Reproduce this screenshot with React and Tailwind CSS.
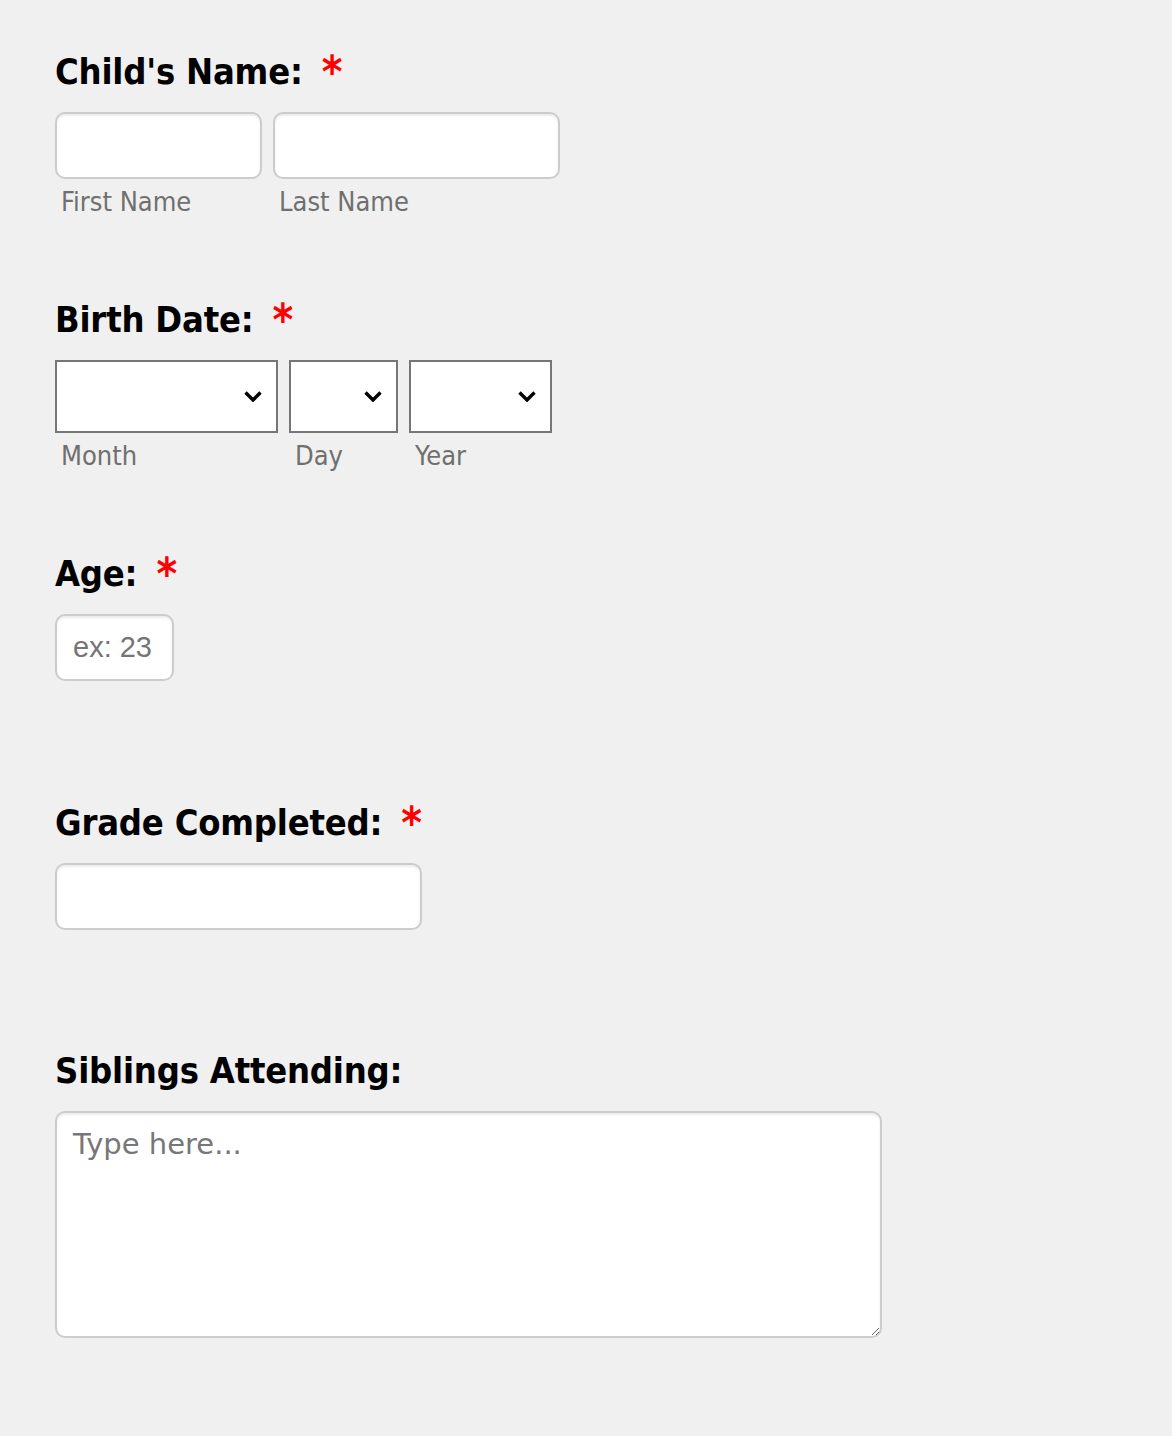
function Req() {
  return (
    <span className="ml-[19px] inline-block align-top text-[44px] leading-[40px] text-[#ff0000]">*</span>
  );
}

function Label({ children, required }) {
  return (
    <div className="h-[40px] text-[36px] leading-[40px] font-bold text-black [font-family:'DejaVu_Sans_Condensed','DejaVu_Sans',sans-serif] tracking-[-0.2px]">
      {children}
      {required && <Req />}
    </div>
  );
}

function SubLabel({ children }) {
  return (
    <div className="mt-[6px] h-[34px] text-[27px] leading-[34px] text-[#6f6f6f] pl-[6px] [font-family:'DejaVu_Sans_Condensed','DejaVu_Sans',sans-serif]">
      {children}
    </div>
  );
}

function TextInput({ width, placeholder }) {
  return (
    <input
      type="text"
      placeholder={placeholder}
      className="block h-[67px] rounded-[10px] border-2 border-[#cccccc] bg-white px-[16px] text-[29px] text-black shadow-[inset_0_2px_2px_rgba(0,0,0,0.08)] outline-none placeholder:text-[#757575] [font-family:'Liberation_Sans',Arial,sans-serif]"
      style={{ width }}
    />
  );
}

function Chevron() {
  return (
    <svg width="18" height="11" viewBox="0 0 18 11" className="pointer-events-none absolute right-[16px] top-[31px]">
      <path d="M1.5 1.5 L9 9 L16.5 1.5" fill="none" stroke="#000" strokeWidth="3.4" />
    </svg>
  );
}

function Select({ width }) {
  return (
    <div className="relative" style={{ width }}>
      <select className="block h-[73px] w-full appearance-none border-2 border-[#767676] bg-white outline-none" defaultValue="">
        <option value=""></option>
      </select>
      <Chevron />
    </div>
  );
}

export default function App() {
  return (
    <div className="min-h-[1436px] w-full bg-[#f0f0f0] pl-[55px] pt-[52px]">
      <section>
        <Label required>Child's Name:</Label>
        <div className="mt-[20px] flex gap-[11px]">
          <div>
            <TextInput width="207px" />
            <SubLabel>First Name</SubLabel>
          </div>
          <div>
            <TextInput width="287px" />
            <SubLabel>Last Name</SubLabel>
          </div>
        </div>
      </section>

      <section className="mt-[81px]">
        <Label required>Birth Date:</Label>
        <div className="mt-[20px] flex gap-[11px]">
          <div>
            <Select width="223px" />
            <SubLabel>Month</SubLabel>
          </div>
          <div>
            <Select width="109px" />
            <SubLabel>Day</SubLabel>
          </div>
          <div>
            <Select width="143px" />
            <SubLabel>Year</SubLabel>
          </div>
        </div>
      </section>

      <section className="mt-[81px]">
        <Label required>Age:</Label>
        <div className="mt-[20px]">
          <TextInput width="119px" placeholder="ex: 23" />
        </div>
      </section>

      <section className="mt-[122px]">
        <Label required>Grade Completed:</Label>
        <div className="mt-[20px]">
          <TextInput width="367px" />
        </div>
      </section>

      <section className="mt-[121px]">
        <Label>Siblings Attending:</Label>
        <div className="mt-[20px]">
          <textarea
            placeholder="Type here..."
            className="block h-[227px] w-[827px] resize-y rounded-[10px] border-2 border-[#cccccc] bg-white px-[16px] py-[10px] text-[29px] leading-[42px] text-black shadow-[inset_0_2px_2px_rgba(0,0,0,0.08)] outline-none placeholder:text-[#777777] [font-family:'DejaVu_Sans',sans-serif]"
          />
        </div>
      </section>
    </div>
  );
}
